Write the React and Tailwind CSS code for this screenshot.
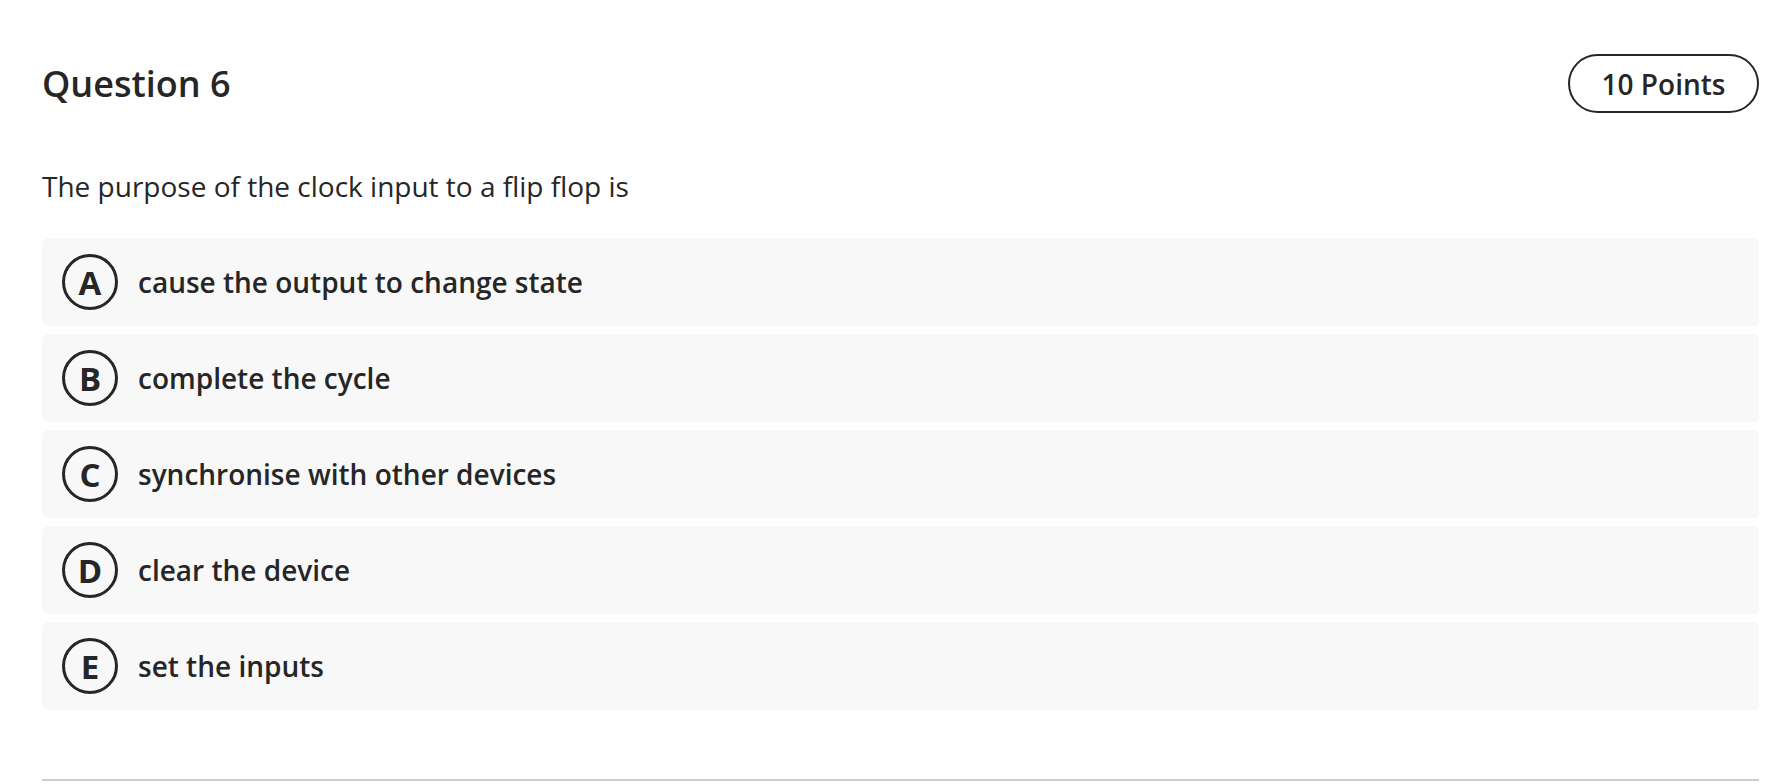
export default function App() {
  const options = [
    ["A", "cause the output to change state"],
    ["B", "complete the cycle"],
    ["C", "synchronise with other devices"],
    ["D", "clear the device"],
    ["E", "set the inputs"],
  ];
  return (
    <div
      className="min-h-screen bg-white pl-[42px] pr-[17px] text-[#262626]"
      style={{ fontFamily: '"Open Sans", "Noto Sans", sans-serif' }}
    >
      <div className="flex items-center justify-between pt-[54px]">
        <h1 className="text-[36px] font-semibold leading-[48px]">Question 6</h1>
        <div className="flex h-[59px] w-[191px] items-center justify-center rounded-full border-2 border-[#262626] text-[28px] font-semibold">
          10 Points
        </div>
      </div>
      <p className="mt-[53px] text-[28px] leading-[40px]">
        The purpose of the clock input to a flip flop is
      </p>
      <div className="mt-[32px] flex flex-col gap-[8px]">
        {options.map(([l, t]) => (
          <div
            key={l}
            className="flex h-[88px] items-center gap-[20px] rounded-[6px] bg-[#f8f8f8] pl-[20px]"
          >
            <div className="flex h-[56px] w-[56px] shrink-0 items-center justify-center rounded-full border-[3px] border-[#262626] text-[33px] font-bold leading-none">
              {l}
            </div>
            <span className="text-[28px] font-semibold">{t}</span>
          </div>
        ))}
      </div>
      <div className="mt-[69px] h-[2px] bg-[#cccccc]" />
    </div>
  );
}
